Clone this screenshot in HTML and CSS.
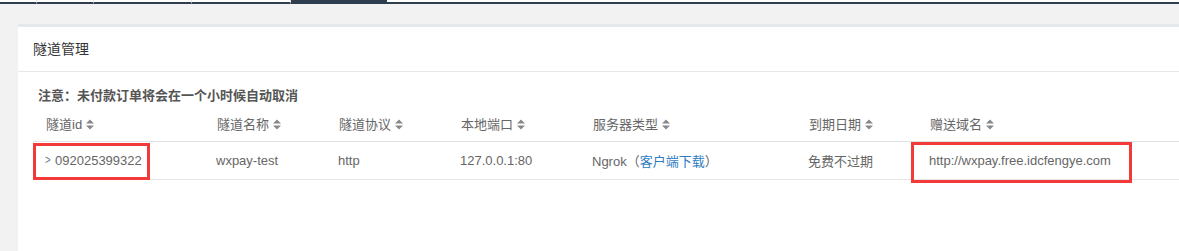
FILE: index.html
```html
<!DOCTYPE html>
<html lang="zh-CN">
<head>
<meta charset="utf-8">
<title>隧道管理</title>
<link rel="stylesheet" href="styles.css">
</head>
<body>
<div class="topbar">
  <div class="seg s1"></div>
  <div class="seg s2"></div>
  <div class="seg s3"></div>
  <div class="seg s4"></div>
  <div class="seg tab"></div>
  <div class="seg rest"></div>
</div>
<div class="main">
  <div class="card">
    <div class="card-header">隧道管理</div>
    <div class="card-body">
      <div class="notice">注意：未付款订单将会在一个小时候自动取消</div>
      <div class="table-wrap">
        <table class="grid">
          <colgroup>
            <col class="c1"><col class="c2"><col class="c3"><col class="c4"><col class="c5"><col class="c6"><col class="c7">
          </colgroup>
          <thead>
            <tr>
              <th>隧道id<svg class="sort" viewBox="0 0 8 11"><path d="M0 4.6 L4 0.6 L8 4.6 Z M0 6.4 L8 6.4 L4 10.4 Z"/></svg></th>
              <th>隧道名称<svg class="sort" viewBox="0 0 8 11"><path d="M0 4.6 L4 0.6 L8 4.6 Z M0 6.4 L8 6.4 L4 10.4 Z"/></svg></th>
              <th>隧道协议<svg class="sort" viewBox="0 0 8 11"><path d="M0 4.6 L4 0.6 L8 4.6 Z M0 6.4 L8 6.4 L4 10.4 Z"/></svg></th>
              <th>本地端口<svg class="sort" viewBox="0 0 8 11"><path d="M0 4.6 L4 0.6 L8 4.6 Z M0 6.4 L8 6.4 L4 10.4 Z"/></svg></th>
              <th>服务器类型<svg class="sort" viewBox="0 0 8 11"><path d="M0 4.6 L4 0.6 L8 4.6 Z M0 6.4 L8 6.4 L4 10.4 Z"/></svg></th>
              <th>到期日期<svg class="sort" viewBox="0 0 8 11"><path d="M0 4.6 L4 0.6 L8 4.6 Z M0 6.4 L8 6.4 L4 10.4 Z"/></svg></th>
              <th>赠送域名<svg class="sort" viewBox="0 0 8 11"><path d="M0 4.6 L4 0.6 L8 4.6 Z M0 6.4 L8 6.4 L4 10.4 Z"/></svg></th>
            </tr>
          </thead>
          <tbody>
            <tr>
              <td><span class="chev">&gt;</span>092025399322</td>
              <td>wxpay-test</td>
              <td>http</td>
              <td>127.0.0.1:80</td>
              <td>Ngrok（<a class="link" href="#">客户端下载</a>）</td>
              <td>免费不过期</td>
              <td>http://wxpay.free.idcfengye.com</td>
            </tr>
          </tbody>
        </table>
        <div class="mark mark-id"></div>
        <div class="mark mark-domain"></div>
      </div>
    </div>
  </div>
</div>
</body>
</html>
```
FILE: styles.css
```css
html, body {
  margin: 0;
  padding: 0;
}
body {
  background: #f2f2f2;
  font-family: "Liberation Sans", Arial, "Noto Sans CJK SC", sans-serif;
  font-size: 13px;
  color: #666;
  overflow: hidden;
}
.topbar {
  display: flex;
  height: 4px;
}
.seg {
  height: 4px;
  box-sizing: border-box;
  background: #ffffff;
  border-bottom: 2px solid #2f3e4e;
  border-right: 1px solid #e2e2e2;
}
.s1 { width: 37px; }
.s2 { width: 57px; }
.s3 { width: 98px; }
.s4 { width: 99px; }
.tab { width: 96px; background: #2f3e4e; border-right: 1px solid #2f3e4e; }
.rest { flex: 1; border-right: none; }

.main {
  padding: 20px 0 0 18px;
  overflow: hidden;
}
.card {
  width: calc(100% + 60px);
  background: #fff;
  border-top: 3px solid #e6e9ec;
  min-height: 230px;
}
.card-header {
  height: 44px;
  line-height: 44px;
  padding-left: 15px;
  font-size: 14px;
  color: #333;
  border-bottom: 1px solid #e8e8e8;
}
.card-body {
  padding: 14px 15px 0 15px;
}
.notice {
  padding-left: 5px;
  height: 20px;
  line-height: 20px;
  font-weight: bold;
  color: #555;
}
.table-wrap {
  position: relative;
}
.grid {
  width: 100%;
  border-collapse: collapse;
  table-layout: fixed;
}
.c1 { width: 171px; }
.c2 { width: 122px; }
.c3 { width: 122px; }
.c4 { width: 132px; }
.c5 { width: 216px; }
.c6 { width: 121px; }
.grid th {
  height: 35px;
  padding: 0 0 0 13px;
  text-align: left;
  font-weight: normal;
  color: #666;
  border-bottom: 1px solid #e2e2e2;
  white-space: nowrap;
}
.grid td {
  height: 37px;
  padding: 0 0 0 12px;
  color: #666;
  border-bottom: 1px solid #e6e6e6;
  white-space: nowrap;
}
.sort {
  width: 8px;
  height: 11px;
  margin-left: 4px;
  vertical-align: -1px;
  fill: #888;
}
.chev {
  display: inline-block;
  width: 10px;
  color: #777;
  font-size: 12px;
  vertical-align: 1px;
  transform: scaleX(0.8);
  transform-origin: left center;
}
.link {
  color: #2e7dc4;
  text-decoration: none;
}
.mark {
  position: absolute;
  border: 3px solid #f23a3a;
  box-sizing: border-box;
}
.mark-id {
  left: 0;
  top: 37px;
  width: 117px;
  height: 37px;
}
.mark-domain {
  left: 878px;
  top: 36px;
  width: 221px;
  height: 41px;
}
```
